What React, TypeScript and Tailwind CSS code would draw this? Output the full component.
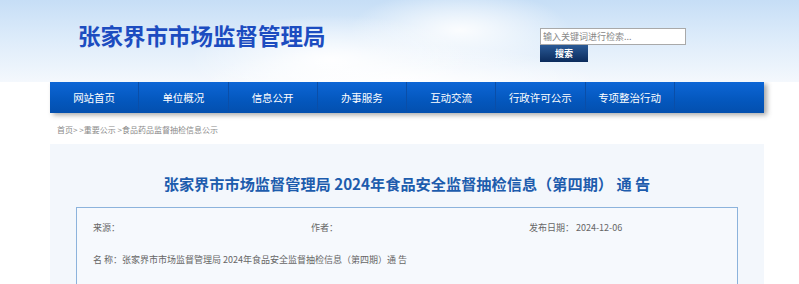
import React from "react";

const NAV = ["网站首页", "单位概况", "信息公开", "办事服务", "互动交流", "行政许可公示", "专项整治行动", ""];

const font = "font-['Microsoft_YaHei','Noto_Sans_CJK_SC',sans-serif]";

export default function App() {
  return (
    <div className={`w-[799px] h-[284px] overflow-hidden bg-white ${font}`}>
      {/* Header */}
      <div className="relative h-[82px] bg-[linear-gradient(180deg,#c6def6_0%,#dcebfa_45%,#f4f8fd_100%)]">
        <div className="absolute inset-0 bg-[radial-gradient(ellipse_140px_45px_at_330px_60px,rgba(255,255,255,0.95),rgba(255,255,255,0)),radial-gradient(ellipse_110px_40px_at_460px_30px,rgba(255,255,255,0.9),rgba(255,255,255,0)),radial-gradient(ellipse_200px_40px_at_400px_85px,rgba(255,255,255,1),rgba(255,255,255,0))]" />
        <div className="relative flex items-start pl-[78px] pt-[20px]">
          <h1 className="text-[22.5px] leading-[30px] font-bold text-[#1c4cc0]">
            张家界市市场监督管理局
          </h1>
          <div className="ml-auto mr-[113px] mt-[8px] flex flex-col">
            <input
              placeholder="输入关键词进行检索..."
              className="w-[146px] h-[17px] border border-[#a9a9a9] bg-white px-[2px] text-[9px] text-[#666] placeholder:text-[#888] outline-none"
            />
            <button className="w-[48px] h-[17px] bg-[linear-gradient(180deg,#2a5a96,#0b2b5c)] text-white text-[9px] font-bold">
              搜索
            </button>
          </div>
        </div>
      </div>

      {/* Navigation */}
      <div className="ml-[50px] w-[714px] h-[31px] grid grid-cols-8 bg-[linear-gradient(180deg,#0d66d6_0%,#0457bd_60%,#034fae_100%)] shadow-[3px_2px_5px_rgba(60,60,60,0.45)]">
        {NAV.map((item, i) => (
          <div
            key={i}
            className={`flex items-center justify-center text-white text-[10.5px] ${
              i < 7 ? "border-r border-[#0a4ea8]" : ""
            }`}
          >
            {item}
          </div>
        ))}
      </div>

      {/* Breadcrumb */}
      <div className="ml-[57px] mt-[10px] h-[14px] text-[8px] leading-[14px] text-[#8a8a8a]">
        首页&gt; &gt;重要公示 &gt;食品药品监督抽检信息公示
      </div>

      {/* Content */}
      <div className="ml-[50px] mt-[7px] w-[714px] h-[200px] bg-[#f3f7fc] pt-[27px]">
        <h2 className="text-center text-[15.2px] leading-[24px] font-bold text-[#1d5cad]">
          张家界市市场监督管理局 2024年食品安全监督抽检信息（第四期） 通 告
        </h2>
        <div className="ml-[26px] mt-[12px] w-[662px] h-[120px] border border-[#8cb3dc] bg-[#f6f9fd] px-[16px] pt-[12px] text-[9px] text-[#666]">
          <div className="grid grid-cols-[218px_218px_1fr] h-[16px] leading-[16px]">
            <span>来源：</span>
            <span>作者：</span>
            <span>发布日期： 2024-12-06</span>
          </div>
          <div className="mt-[16px] leading-[16px]">
            名 称：张家界市市场监督管理局 2024年食品安全监督抽检信息（第四期）通 告
          </div>
        </div>
      </div>
    </div>
  );
}
